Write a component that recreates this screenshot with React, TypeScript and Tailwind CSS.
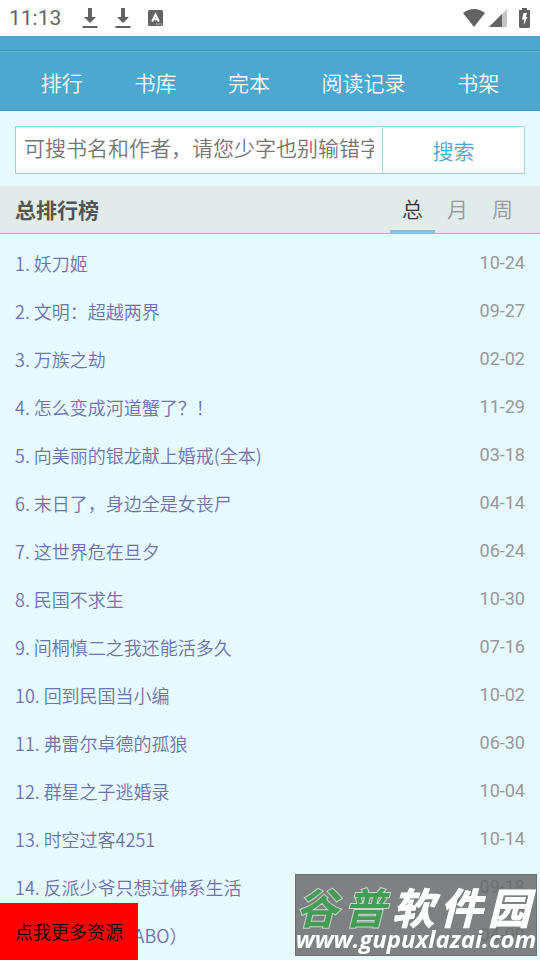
const navItems = ['排行', '书库', '完本', '阅读记录', '书架'];

const tabs = ['总', '月', '周'];

const books = [
  { title: '妖刀姬', date: '10-24' },
  { title: '文明：超越两界', date: '09-27' },
  { title: '万族之劫', date: '02-02' },
  { title: '怎么变成河道蟹了？！', date: '11-29' },
  { title: '向美丽的银龙献上婚戒(全本)', date: '03-18' },
  { title: '末日了，身边全是女丧尸', date: '04-14' },
  { title: '这世界危在旦夕', date: '06-24' },
  { title: '民国不求生', date: '10-30' },
  { title: '间桐慎二之我还能活多久', date: '07-16' },
  { title: '回到民国当小编', date: '10-02' },
  { title: '弗雷尔卓德的孤狼', date: '06-30' },
  { title: '群星之子逃婚录', date: '10-04' },
  { title: '时空过客4251', date: '10-14' },
  { title: '反派少爷只想过佛系生活', date: '09-18' },
  { title: '穿书之后（ABO）', date: '04-09' },
];

function DownloadIcon() {
  return (
    <svg width="16" height="22" viewBox="0 0 16 22" fill="#636363" aria-hidden="true">
      <path d="M6 1h4v9h4l-6 6-6-6h4z" />
      <path d="M0.5 19h15v2h-15z" />
    </svg>
  );
}

function StatusBar() {
  return (
    <div className="flex h-9 items-center bg-white pr-2.5 pl-[9px] font-[Roboto,sans-serif] text-[21px] text-[#636363]">
      <span className="w-[73px] pt-0.5 font-normal">11:13</span>
      <div className="flex items-center gap-[17px]">
        <DownloadIcon />
        <DownloadIcon />
        <svg width="15" height="16" viewBox="0 0 15 16" aria-hidden="true">
          <rect width="15" height="16" rx="1.5" fill="#636363" />
          <path d="M4.200 11.500 7.500 4.500 10.800 11.500M5.500 9.300h4" fill="none" stroke="#fff" strokeWidth="2" />
          <path d="M8 14h1.200M10.300 14h1.200M12.600 14h1.200" stroke="#fff" strokeWidth="1.200" />
        </svg>
      </div>
      <div className="ml-auto flex items-center">
        <svg width="24" height="20" viewBox="0 0 24 20" className="mr-[3px]" aria-hidden="true">
          <path d="M1 5Q12-3 23 5L12 19z" fill="#636363" />
        </svg>
        <svg width="18" height="18" viewBox="0 0 18 18" className="mr-[12px]" aria-hidden="true">
          <path d="M18 0v18H0z" fill="#c4c4c4" />
          <path d="M13 5v13H0z" fill="#636363" />
        </svg>
        <svg width="11" height="20" viewBox="0 0 11 20" aria-hidden="true">
          <path d="M3 0h5v2h3v16.500q0 1.500-1.500 1.500h-8q-1.500 0-1.500-1.500V2h3z" fill="#636363" />
          <path d="M4.500 5H8L6.800 9H8.500L4.800 17 5.200 11.500H3z" fill="#fff" />
        </svg>
      </div>
    </div>
  );
}

function Watermark() {
  return (
    <div className="pointer-events-none fixed right-[3px] bottom-1 flex w-[242px] flex-col items-center border border-[#6b7070] bg-[#656766]/82 pb-1 italic">
      <div className="flex w-full justify-between pt-2.5 pr-1.5 text-[42px] leading-[42px] font-bold whitespace-nowrap text-white">
        {['谷', '普', '软', '件', '园'].map((char, i) => (
          <span
            key={char}
            className={
              i < 2
                ? 'text-[#459c57] [paint-order:stroke_fill] [-webkit-text-stroke:2px_#c5d6c8]'
                : '[-webkit-text-stroke:1px_#fff]'
            }
          >
            {char}
          </span>
        ))}
      </div>
      <div className="font-['Open_Sans',sans-serif] text-[24px] leading-[24px] font-bold whitespace-nowrap text-white">
        www.gupuxlazai.com
      </div>
    </div>
  );
}

export default function App() {
  return (
    <div className="min-h-screen bg-[#e6faff] font-['Noto_Sans_CJK_SC',sans-serif] font-[350]">
      <StatusBar />

      <header className="bg-[#4da8cf] text-white">
        <div className="h-[15px] border-b border-[#4094b9]" />
        <nav className="flex h-[60px] items-center justify-around border-t border-b border-t-[#62b4d6] border-b-[#4497bb] px-[15px] pt-1 text-[21px]">
          {navItems.map((item) => (
            <a key={item} href="#">
              {item}
            </a>
          ))}
        </nav>
      </header>

      <form className="flex px-[15px] pt-[15px] pb-3 text-[21px]" onSubmit={(e) => e.preventDefault()}>
        <input
          type="text"
          aria-label="搜索书名或作者"
          placeholder="可搜书名和作者，请您少字也别输错字"
          className="h-12 min-w-0 flex-1 border border-[#a2d2e7] bg-white px-2 pb-1.5 placeholder:text-[#757575] outline-none"
        />
        <button
          type="submit"
          className="h-12 w-[142px] border border-l-0 border-[#a2d2e7] bg-white pt-0.5 text-[#4da8cf]"
        >
          搜索
        </button>
      </form>

      <div className="flex h-12 justify-between border-b border-[#85c2e0] bg-[#e0ebea] px-[15px] text-[21px]">
        <h2 className="leading-[47px] font-bold text-[#555]">总排行榜</h2>
        <div className="flex">
          {tabs.map((tab, i) => (
            <button
              key={tab}
              type="button"
              className={
                i === 0
                  ? 'w-[45px] border-b-[3px] border-[#85c2e0] pt-0.5 text-[#333]'
                  : 'w-[45px] border-b-[3px] border-transparent pt-0.5 text-[#999]'
              }
            >
              {tab}
            </button>
          ))}
        </div>
      </div>

      <ol className="px-[15px] pt-[5px] text-[18px] leading-[48px]">
        {books.map((book, i) => (
          <li key={book.title} className="flex justify-between">
            <a href="#" className="text-[#6c74ab]">
              {i + 1}. {book.title}
            </a>
            <span className="font-[Roboto,sans-serif] font-normal text-[#999]">{book.date}</span>
          </li>
        ))}
      </ol>

      <a href="#" className="fixed bottom-0 left-0 bg-[red] px-[15px] py-[15px] text-[18px] leading-[27px] text-black">
        点我更多资源
      </a>
      <Watermark />
    </div>
  );
}
